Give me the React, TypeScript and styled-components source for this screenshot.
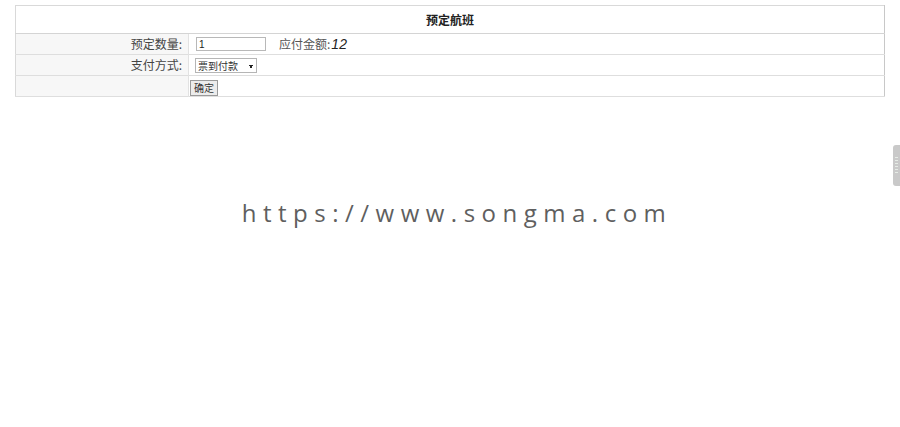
import React, { ReactElement, useState } from 'react'
import styled, { createGlobalStyle } from 'styled-components'

const GlobalStyle = createGlobalStyle`
  html, body {
    margin: 0;
    padding: 0;
    background: #fff;
  }
  body {
    font-family: 'Noto Sans CJK SC', 'Liberation Sans', sans-serif;
    font-size: 12px;
    color: #333;
  }
`

const Page = styled.div`
  position: relative;
  width: 900px;
  height: 427px;
  padding: 5px 15px 0;
  box-sizing: border-box;
`

const BookTable = styled.table`
  width: 870px;
  border-collapse: collapse;
  border: 1px solid #d9d9d9;
  border-right-color: #c8c8c8;
`

const HeadCell = styled.th`
  height: 27px;
  padding: 0;
  font-size: 12px;
  font-weight: bold;
  color: #222;
  text-align: center;
  border-bottom: 1px solid #d4d4d4;
`

const Row = styled.tr`
  border-bottom: 1px solid #dedede;
`

const LabelCell = styled.td`
  width: 166px;
  height: 20px;
  padding: 0 6px 0 0;
  text-align: right;
  background: #f7f7f7;
  border-right: 1px solid #e2e2e2;
  color: #444;
  font-size: 12px;
  line-height: 20px;
  vertical-align: middle;
`

const ValueCell = styled.td`
  height: 20px;
  padding: 0 0 0 7px;
  vertical-align: middle;
  font-size: 12px;
  line-height: 20px;
`

const Field = styled.div`
  display: flex;
  align-items: center;
  gap: 13px;
`

const QtyInput = styled.input`
  width: 64px;
  height: 12px;
  margin: 0;
  padding: 0 2px;
  box-sizing: content-box;
  border: 1px solid #b8b8b8;
  font-family: 'Liberation Sans', sans-serif;
  font-size: 10px;
  color: #222;
  outline: none;
`

const Amount = styled.span`
  color: #555;
  font-size: 12px;

  & em {
    font-family: 'Liberation Sans', sans-serif;
    font-size: 14px;
    color: #222;
    margin-left: 1px;
  }
`

const PaySelect = styled.select`
  width: 62px;
  height: 15px;
  margin: 0 0 0 -1px;
  padding: 0 0 0 2px;
  border: 1px solid #b5b5b5;
  background: #fff;
  font-family: 'Noto Sans CJK SC', sans-serif;
  font-size: 10px;
  line-height: 13px;
  color: #333;
  appearance: none;
  background-image: linear-gradient(45deg, transparent 50%, #222 50%),
    linear-gradient(135deg, #222 50%, transparent 50%);
  background-position: 52px 6px, 55px 6px;
  background-size: 3px 3px, 3px 3px;
  background-repeat: no-repeat;
`

const SubmitButton = styled.button`
  height: 16px;
  margin: 0 0 0 -6px;
  padding: 0 3px;
  border: 1px solid #9a9a9a;
  background: #ececec;
  font-family: 'Noto Sans CJK SC', sans-serif;
  font-size: 10px;
  line-height: 13px;
  color: #333;
  vertical-align: middle;
`

const Watermark = styled.div`
  position: absolute;
  left: 0;
  right: 0;
  top: 196px;
  text-align: center;
  padding-left: 14px;
  font-family: 'Open Sans', sans-serif;
  font-size: 24px;
  letter-spacing: 6.5px;
  color: #5f5f5f;
  pointer-events: none;
`

const SideTab = styled.div`
  position: absolute;
  right: 0;
  top: 145px;
  width: 7px;
  height: 41px;
  border-radius: 3px 0 0 3px;
  background: #c9c9c9;
  display: flex;
  align-items: center;
  justify-content: center;

  &::after {
    content: '';
    width: 3px;
    height: 18px;
    background: repeating-linear-gradient(
      to bottom,
      #e6ece6 0 1px,
      transparent 1px 3px
    );
  }
`

export default function App(): ReactElement {
  const price = 12
  const [qty, setQty] = useState<string>('1')

  return (
    <Page>
      <GlobalStyle />
      <BookTable>
        <thead>
          <tr>
            <HeadCell colSpan={2}>预定航班</HeadCell>
          </tr>
        </thead>
        <tbody>
          <Row>
            <LabelCell>预定数量:</LabelCell>
            <ValueCell>
              <Field>
                <QtyInput
                  value={qty}
                  onChange={(e): void => setQty(e.target.value)}
                />
                <Amount>
                  应付金额:<em>{(Number(qty) || 0) * price}</em>
                </Amount>
              </Field>
            </ValueCell>
          </Row>
          <Row>
            <LabelCell>支付方式:</LabelCell>
            <ValueCell>
              <PaySelect defaultValue="arrive">
                <option value="arrive">票到付款</option>
                <option value="online">在线支付</option>
              </PaySelect>
            </ValueCell>
          </Row>
          <Row>
            <LabelCell />
            <ValueCell>
              <SubmitButton type="button">确定</SubmitButton>
            </ValueCell>
          </Row>
        </tbody>
      </BookTable>
      <Watermark>https://www.songma.com</Watermark>
      <SideTab />
    </Page>
  )
}
